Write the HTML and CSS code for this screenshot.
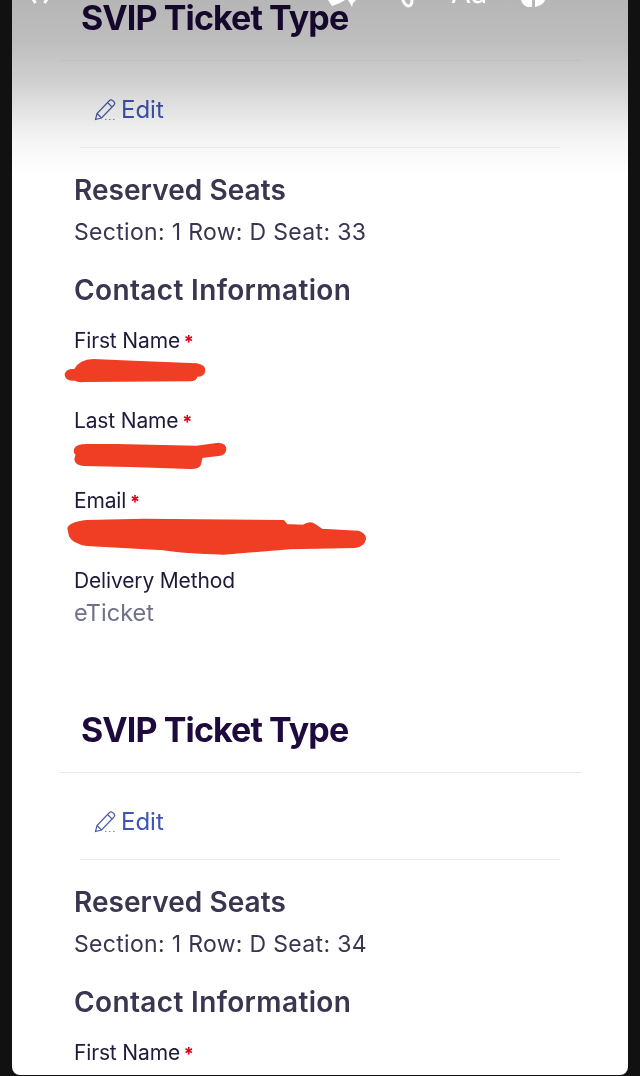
FILE: index.html
```html
<!DOCTYPE html>
<html lang="en">
<head>
    <meta charset="UTF-8">
    <meta name="viewport" content="width=device-width, initial-scale=1.0">
    <title>SVIP Ticket Type</title>
    <link rel="stylesheet" href="styles.css">
</head>
<body>
    <div class="panel">
        <!-- toolbar of the photo app, fading over the page -->
        <div class="shade"></div>
        <div class="tools">
            <span class="tool tool-close">
                <svg width="16" height="4" viewBox="0 0 16 4"><path d="M1 -1 L3.5 3 M15 -1 L12.5 3" /></svg>
            </span>
            <span class="tool tool-sparkle">
                <svg width="28" height="8" viewBox="0 0 28 8"><path class="fill" d="M0 0 H17 L12 3 L4 6 Z M20 0 H28 L25 3 L24 7 L22 3 Z" /></svg>
            </span>
            <span class="tool tool-clip">
                <svg width="14" height="8" viewBox="0 0 14 8"><path d="M2 -3 Q4 5 8 6 Q12 6 12 0" /></svg>
            </span>
            <span class="tool tool-text">Aa</span>
            <span class="tool tool-sticker">
                <svg width="26" height="8" viewBox="0 0 26 8"><path class="fill" d="M1 0 H12 V7 Q3 8 1 0 Z M15 0 H25 Q24 5 15 7 Z" /></svg>
            </span>
        </div>

        <section class="ticket ticket-first">
            <h1 class="ticket-title">SVIP Ticket Type</h1>
            <a class="edit-row" href="#">
                <svg class="pencil" width="23" height="23" viewBox="0 0 23 23">
                    <path d="M1.5 21.5 L3 15.5 L15.5 2.5 Q17 1.2 18.8 2.6 L20.2 4 Q21.5 5.6 20 7 L7.5 20 Z M13.5 4.5 L18.2 9.2 M3 15.5 L7.5 20" />
                    <path class="dots" d="M11 21.5 H12.5 M15 21.5 H16.5 M19 21.5 H20.5" />
                </svg>
                Edit
            </a>
            <div class="ticket-body">
                <h2>Reserved Seats</h2>
                <p class="seat">Section: 1 Row: D Seat: 33</p>
                <h2 class="contact">Contact Information</h2>
                <div class="field">
                    <div class="label">First Name <span class="req">*</span></div>
                    <svg class="scribble" width="320" height="32" viewBox="42 108 960 96">
                        <path d="M47 160 Q50 146 75 146 Q90 118 130 117 L250 122 L440 130 Q465 135 463 150 Q460 165 440 164 Q438 178 420 178 L100 180 Q85 183 75 176 Q47 178 47 160 Z" />
                    </svg>
                </div>
                <div class="field">
                    <div class="label">Last Name <span class="req">*</span></div>
                    <svg class="scribble" width="320" height="32" viewBox="42 348 960 96">
                        <path d="M75 385 Q80 372 110 372 L200 372 L440 377 L505 368 Q527 370 526 385 Q525 400 505 402 L455 408 L450 430 Q445 442 420 441 L240 435 L100 432 Q78 430 76 415 L80 400 Q72 395 75 385 Z" />
                    </svg>
                </div>
                <div class="field">
                    <div class="label">Email <span class="req">*</span></div>
                    <svg class="scribble" width="320" height="32" viewBox="42 588 960 96">
                        <path d="M55 622 Q60 605 110 600 L280 596 L700 600 L710 612 L760 614 Q780 600 795 612 L815 626 L925 632 Q947 640 945 655 Q940 675 915 678 L720 682 L520 698 Q400 695 340 685 L110 672 Q70 665 60 645 Z" />
                    </svg>
                </div>
                <div class="field">
                    <div class="label">Delivery Method</div>
                    <div class="value">eTicket</div>
                </div>
            </div>
        </section>

        <section class="ticket">
            <h1 class="ticket-title">SVIP Ticket Type</h1>
            <a class="edit-row" href="#">
                <svg class="pencil" width="23" height="23" viewBox="0 0 23 23">
                    <path d="M1.5 21.5 L3 15.5 L15.5 2.5 Q17 1.2 18.8 2.6 L20.2 4 Q21.5 5.6 20 7 L7.5 20 Z M13.5 4.5 L18.2 9.2 M3 15.5 L7.5 20" />
                    <path class="dots" d="M11 21.5 H12.5 M15 21.5 H16.5 M19 21.5 H20.5" />
                </svg>
                Edit
            </a>
            <div class="ticket-body">
                <h2>Reserved Seats</h2>
                <p class="seat">Section: 1 Row: D Seat: 34</p>
                <h2 class="contact">Contact Information</h2>
                <div class="field">
                    <div class="label">First Name <span class="req">*</span></div>
                    <div class="value">Guest</div>
                </div>
            </div>
        </section>
    </div>
</body>
</html>
```

FILE: styles.css
```css
html, body {
    margin: 0;
    height: 100%;
}
body {
    background-color: #111;
    font-family: 'Inter', 'Liberation Sans', sans-serif;
    overflow: hidden;
}
.panel {
    position: relative;
    background-color: #fff;
    margin: 0 12px;
    height: 1075px;
    border-radius: 0 0 8px 8px;
    overflow: hidden;
}
.shade {
    position: absolute;
    top: 0;
    left: 0;
    right: 0;
    height: 175px;
    background: linear-gradient(180deg, #b6b6b6 0, #bdbdbd 40px, #cfcfcf 80px, #e3e3e3 110px, #f5f5f5 140px, #fff 175px);
    mix-blend-mode: multiply;
}
.tools {
    position: absolute;
    top: 0;
    left: 0;
    right: 0;
}
.tool {
    position: absolute;
    top: 0;
    display: block;
    line-height: 0;
}
.tool svg {
    display: block;
    fill: none;
    stroke: #fff;
    stroke-width: 3;
}
.tool svg .fill {
    fill: #fff;
    stroke: none;
}
.tool-close { left: 20px; }
.tool-sparkle { left: 316px; }
.tool-clip { left: 388px; }
.tool-sticker { left: 508px; }
.tool-text {
    left: 439px;
    top: -19px;
    color: #fff;
    font-size: 29px;
    line-height: 24px;
}
.ticket {
    margin-bottom: 85px;
}
.ticket-first {
    margin-top: -2px;
}
.ticket-title {
    margin: 0 47px 0 48px;
    padding: 0 0 22px 21px;
    border-bottom: 1px solid #e8e8ea;
    font-size: 34px;
    font-weight: 700;
    line-height: 40px;
    letter-spacing: -0.9px;
    color: #1e0a3c;
}
.ticket-first .ticket-title {
    border-bottom-color: #f6f6f6;
}
.ticket-first .edit-row {
    border-bottom-color: #f2f2f2;
}
.edit-row {
    display: flex;
    align-items: center;
    gap: 4px;
    margin: 0 68px;
    padding: 36px 0 26px 14px;
    height: 24px;
    border-bottom: 1px solid #e8e8ea;
    font-size: 24px;
    color: #3d55b5;
    text-decoration: none;
}
.pencil {
    fill: none;
    stroke: #4c5aa8;
    stroke-width: 1.2;
}
.pencil .dots {
    stroke: #8a8a98;
}
.ticket-body {
    padding-left: 62px;
}
.ticket-body h2 {
    margin: 24px 0 0;
    font-size: 28px;
    font-weight: 600;
    line-height: 36px;
    letter-spacing: 0.05px;
    color: #39364f;
}
.seat {
    margin: 8px 0 0;
    font-size: 23px;
    line-height: 32px;
    letter-spacing: 0.32px;
    color: #39364f;
}
.ticket-body .contact {
    margin-top: 24px;
    margin-bottom: 21px;
    letter-spacing: 0.36px;
}
.field {
    height: 56px;
    margin-bottom: 24px;
}
.label {
    font-size: 21px;
    line-height: 24px;
    letter-spacing: -0.15px;
    color: #1e1a3a;
}
.req {
    margin-left: -2px;
    font-size: 18px;
    font-weight: 700;
    color: #d6001c;
}
.value {
    margin-top: 4px;
    font-size: 23.5px;
    line-height: 32px;
    color: #6f7287;
}
.scribble {
    display: block;
    margin: 3px 0 0 -10px;
    fill: #f03e24;
    stroke: #f03e24;
    stroke-width: 6;
    stroke-linejoin: round;
    overflow: visible;
}
```
